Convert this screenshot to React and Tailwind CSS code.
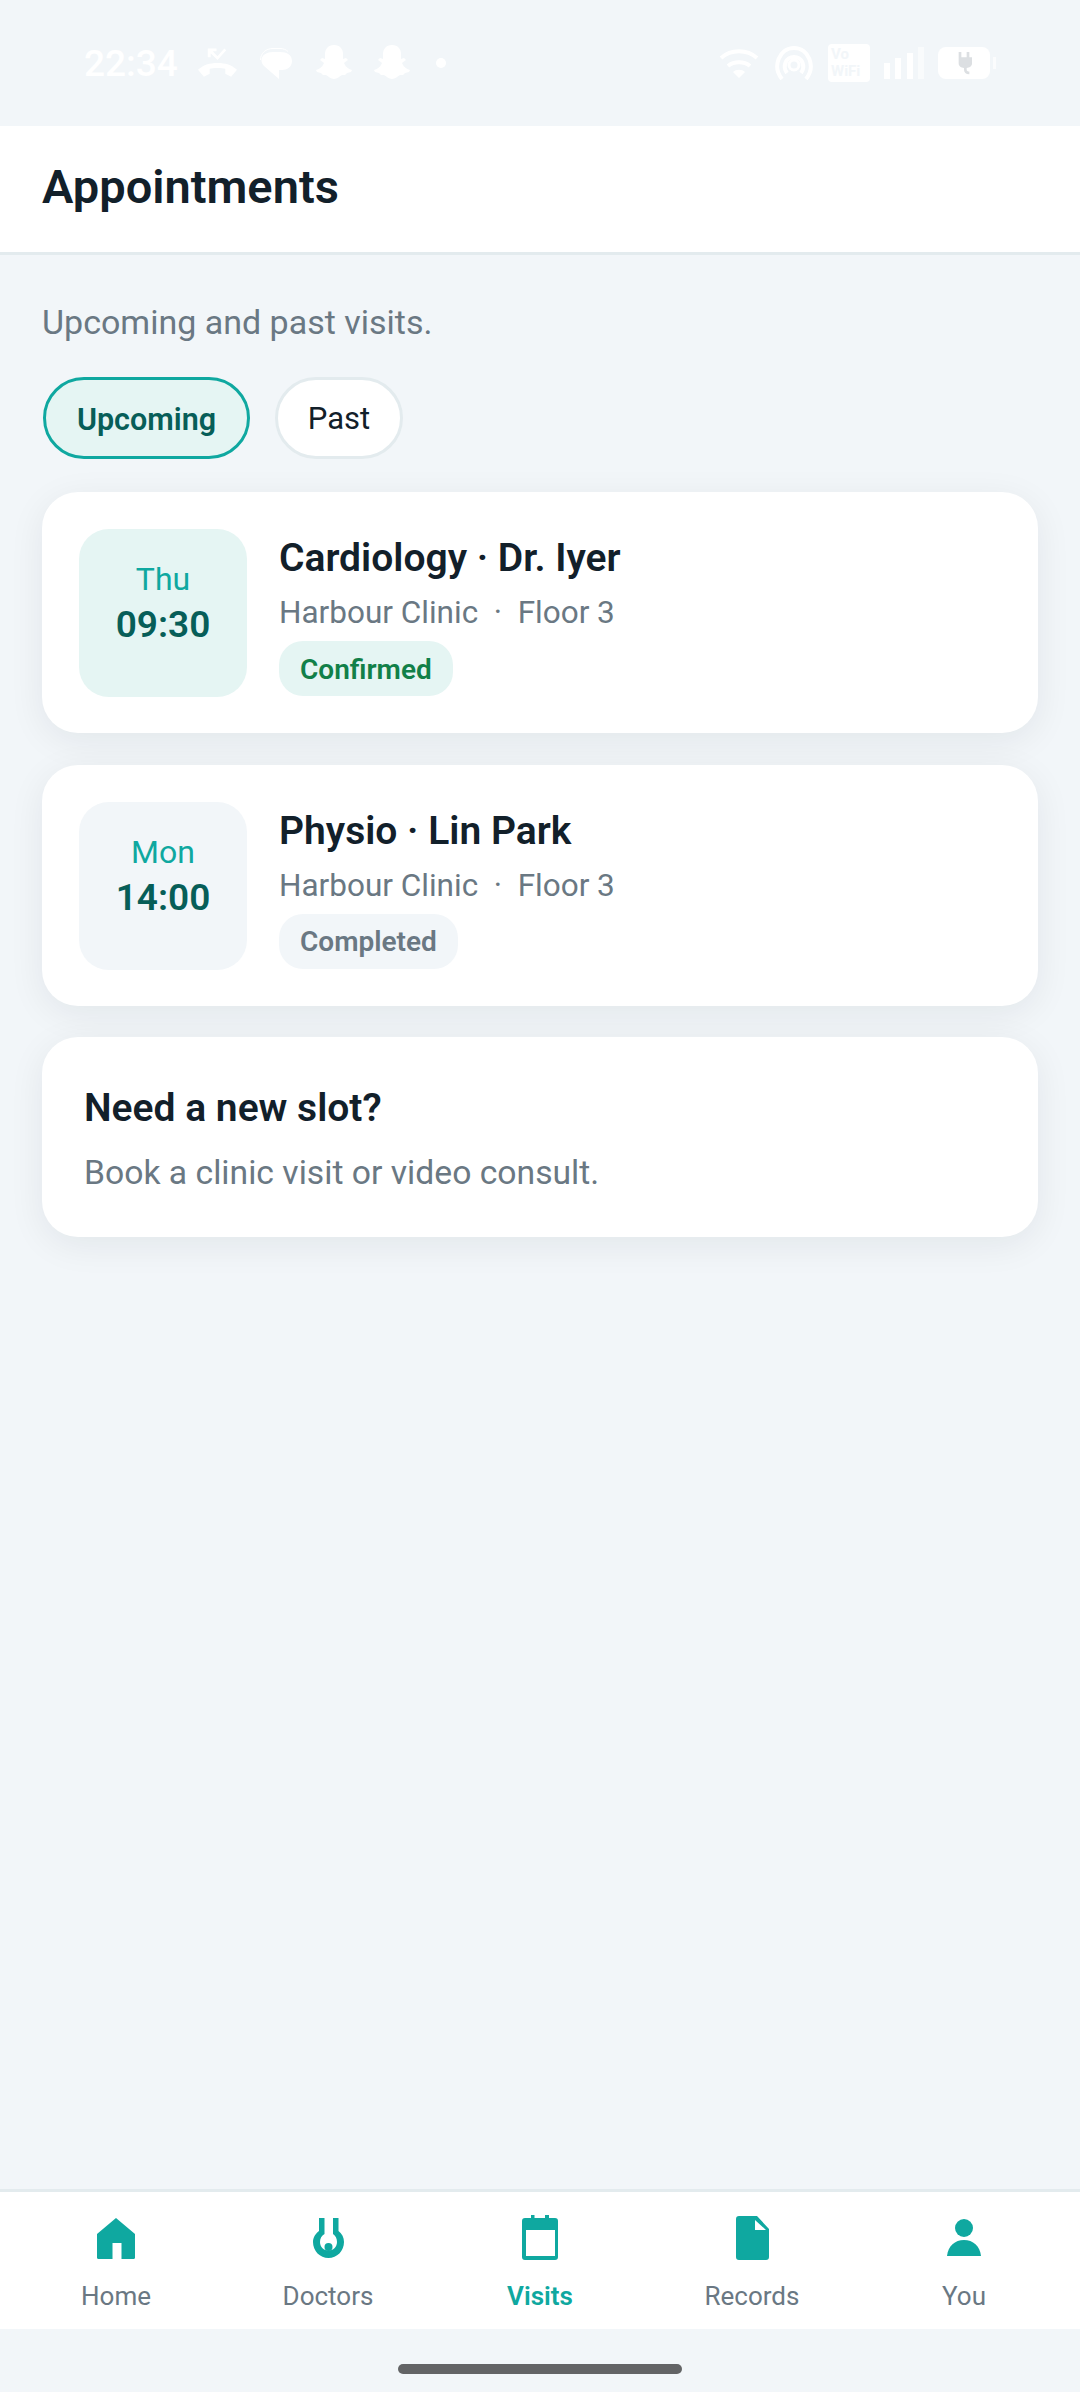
import React from 'react';

const CARD_SHADOW = 'shadow-[0_8px_36px_rgba(18,32,41,0.07)]';

// status bar glyphs, all white on the pale page background
const StatusLeft = () => (
  <div className="flex items-center text-white">
    <span className="text-[37px] leading-none font-medium ml-[84px] w-[93px]">22:34</span>
    <svg width="39" height="30" viewBox="0 0 40 30" className="ml-[21px]" fill="currentColor">
      <path d="M0 22c5-5 12-7 20-7s15 2 20 7l-6 7-6-3v-5c-3-1-13-1-16 0v5l-6 3z" />
      <path d="M10 0h9v3h-4l5 5 7-8 2 2-9 10-7-7v4h-3z" />
    </svg>
    <svg width="32" height="31" viewBox="0 0 32 31" className="ml-[23px]" fill="currentColor">
      <path d="M.5 12C.5 5 6 .5 13 .5h7c3 0 6 1 8 3" fill="none" stroke="#fff" strokeWidth="1" />
      <path d="M13 4h7c7 0 12 3 12 9s-5 9-10 9h-3v9L4 18C2 16 1.500 14 1.500 12 1.500 7 7 4 13 4z" />
    </svg>
    <SnapGhost className="ml-[24px]" />
    <SnapGhost className="ml-[22px]" />
    <span className="ml-[26px] w-[10px] h-[10px] rounded-full bg-white" />
  </div>
);

const SnapGhost = ({ className }) => (
  <svg width="36" height="36" viewBox="0 0 36 36" fill="#fff" className={className}>
    <path d="M18 0c6 0 9 4 9 9v5l3-1 2 2-4 3c1 3 4 6 8 7l-1 2-4 1-2 2-3 0c-2 1-5 4-8 4s-6-3-8-4l-3 0-2-2-4-1-1-2c4-1 7-4 8-7l-4-3 2-2 3 1V9c0-5 3-9 9-9z" />
  </svg>
);

const StatusRight = () => (
  <div className="flex items-center text-white">
    <svg width="40" height="30" viewBox="0 0 40 30" fill="none" stroke="#fff" strokeWidth="4">
      <path d="M2 10c10-9 26-9 36 0" />
      <path d="M9 18c6-5 16-5 22 0" />
      <path d="M14 24l6 6 6-6c-3-3-9-3-12 0z" fill="#fff" stroke="none" />
    </svg>
    <svg width="38" height="34" viewBox="0 0 38 34" fill="none" stroke="#fff" strokeWidth="4" className="ml-[16px]">
      <path d="M7 33C-3 21 4 2 19 2s22 19 12 31" />
      <path d="M12 27C7 20 11 11 19 11s12 9 7 16" />
      <circle cx="19" cy="19" r="5" strokeWidth="3" />
    </svg>
    <div className="ml-[15px] w-[42px] h-[38px] rounded-[4px] bg-white text-[#f2f6f9] text-[15px] leading-[17px] font-bold pl-[3px] pt-[2px] overflow-hidden">
      Vo<br />WiFi
    </div>
    <div className="ml-[14px] w-[40px] flex items-end justify-between h-[32px]">
      <span className="w-[6px] h-[16px] bg-white" />
      <span className="w-[6px] h-[21px] bg-white" />
      <span className="w-[6px] h-[26px] bg-white" />
      <span className="w-[6px] h-[32px] bg-white/50" />
    </div>
    <div className="ml-[14px] w-[52px] h-[32px] rounded-[8px] bg-white flex items-center justify-center">
      <svg width="16" height="25" viewBox="0 0 18 26" fill="#dcdfe2">
        <path d="M3 0h3v6h6V0h3v6h3v7c0 3-3 5-6 5v2c0 1 1 2 3 2v3c-4 0-6-2-6-5v-2c-3 0-6-2-6-5V6H0V6h3z" />
      </svg>
    </div>
    <span className="ml-[3px] w-[3px] h-[12px] bg-white/70" />
  </div>
);

const Visit = ({ day, time, title, place, status, tone }) => (
  <div className={`rounded-[36px] bg-white ${CARD_SHADOW} flex p-[37px] h-[241px]`}>
    <div className={`w-[168px] h-[168px] rounded-[30px] flex flex-col items-center justify-center pb-[19px] ${tone === 'green' ? 'bg-[#e5f5f3]' : 'bg-[#f2f6f9]'}`}>
      <span className="text-[32px] leading-[43px] text-[#0fa8a0]">{day}</span>
      <span className="text-[37px] leading-[48px] font-semibold text-[#075e58]">{time}</span>
    </div>
    <div className="ml-[32px] flex flex-col items-start">
      <div className="text-[39px] leading-[54px] font-semibold text-[#12202a] mt-[2px]">{title}</div>
      <div className="text-[31.500px] leading-[40px] text-[#6a7883] mt-[8px] whitespace-pre">{place}</div>
      <div className={`mt-[8px] h-[55px] px-[21px] pt-[2px] rounded-[24px] flex items-center text-[28px] font-semibold ${tone === 'green' ? 'bg-[#e5f5f3] text-[#118048]' : 'bg-[#f2f6f9] text-[#6a7883]'}`}>
        {status}
      </div>
    </div>
  </div>
);

const tabs = [
  {
    label: 'Home',
    icon: <path d="M24 4 5 20v23.500c0 .8.5 1.500 1.500 1.500h14V29h9v16h12c1 0 1.500-.7 1.500-1.500V20z" />,
  },
  {
    label: 'Doctors',
    icon: (
      <>
        <path d="M15 4h5.500v16c-3 1.500-4.500 4.500-4.500 8 0 5 4 8.500 8.500 8.500S33 33 33 28c0-3.500-1.500-6.500-4-8V4h5.500v13c3.500 2.500 5.500 6.500 5.500 11 0 9-7 16-15.500 16S9 37 9 28c0-4.500 2.500-8.500 6-11z" />
        <circle cx="24.500" cy="33" r="4" />
      </>
    ),
  },
  {
    label: 'Visits',
    active: true,
    icon: (
      <path fillRule="evenodd" d="M15 1h3.500v3h10.500V1h4v3h6c2 0 3 1 3 3v36c0 2-1 3-3 3H9c-2 0-3-1-3-3V7c0-2 1-3 3-3h6zM10 16v26h29V16z" />
    ),
  },
  {
    label: 'Records',
    icon: <path fillRule="evenodd" d="M11 2h18l12 13v28c0 2-1 3-3 3H11c-2 0-3-1-3-3V5c0-2 1-3 3-3zm16 4v10h11z" />,
  },
  {
    label: 'You',
    icon: (
      <>
        <circle cx="24" cy="14" r="9" />
        <path d="M7 42c1-10 8-16 17-16s16 6 17 16z" />
      </>
    ),
  },
];

const BottomNav = () => (
  <nav className="bg-white border-t-[3px] border-[#e3ebee] h-[140px] grid grid-cols-5 px-[10px]">
    {tabs.map((tab) => (
      <div key={tab.label} className="flex flex-col items-center pt-[22px]">
        <svg width="48" height="48" viewBox="0 0 48 48" fill="#0fa8a0">{tab.icon}</svg>
        <span className={`mt-[18px] text-[26px] leading-[32px] ${tab.active ? 'font-semibold text-[#0fa8a0]' : 'text-[#6a7883]'}`}>
          {tab.label}
        </span>
      </div>
    ))}
  </nav>
);

export default function App() {
  return (
    <div className="w-[1080px] h-[2392px] bg-[#f2f6f9] flex flex-col font-['Roboto',sans-serif]">
      <div className="h-[126px] flex justify-between items-center pr-[84px]">
        <StatusLeft />
        <StatusRight />
      </div>

      <header className="h-[129px] bg-white border-b-[3px] border-[#e3ebee] px-[42px] pb-[3px] flex items-center">
        <h1 className="text-[47px] font-semibold text-[#12202a]">Appointments</h1>
      </header>

      <main className="flex-1 px-[42px] pt-[45px]">
        <p className="text-[34px] leading-[44px] text-[#6a7883]">Upcoming and past visits.</p>
        <div className="flex gap-[25px] mt-[33px] ml-[1px]">
          <button className="h-[82px] w-[207px] pt-[3px] rounded-full border-[3px] border-[#0fa8a0] bg-[#e5f5f3] text-[30.500px] font-semibold text-[#075e58]">
            Upcoming
          </button>
          <button className="h-[82px] w-[128px] pt-[3px] rounded-full border-[3px] border-[#e3ebee] bg-white text-[31px] text-[#12202a]">
            Past
          </button>
        </div>
        <div className="flex flex-col gap-[31.500px] mt-[33px]">
          <Visit day="Thu" time="09:30" title="Cardiology · Dr. Iyer" place="Harbour Clinic  ·  Floor 3" status="Confirmed" tone="green" />
          <Visit day="Mon" time="14:00" title="Physio · Lin Park" place="Harbour Clinic  ·  Floor 3" status="Completed" tone="gray" />
          <div className={`rounded-[36px] bg-white ${CARD_SHADOW} h-[200px] px-[42px] pt-[46px]`}>
            <div className="text-[39px] leading-[50px] font-semibold text-[#12202a]">Need a new slot?</div>
            <div className="text-[33.700px] leading-[44px] text-[#6a7883] mt-[18px]">Book a clinic visit or video consult.</div>
          </div>
        </div>
      </main>

      <BottomNav />
      <div className="h-[63px] flex justify-center pt-[35px]">
        <span className="w-[284px] h-[10px] rounded-full bg-[#636466]" />
      </div>
    </div>
  );
}
